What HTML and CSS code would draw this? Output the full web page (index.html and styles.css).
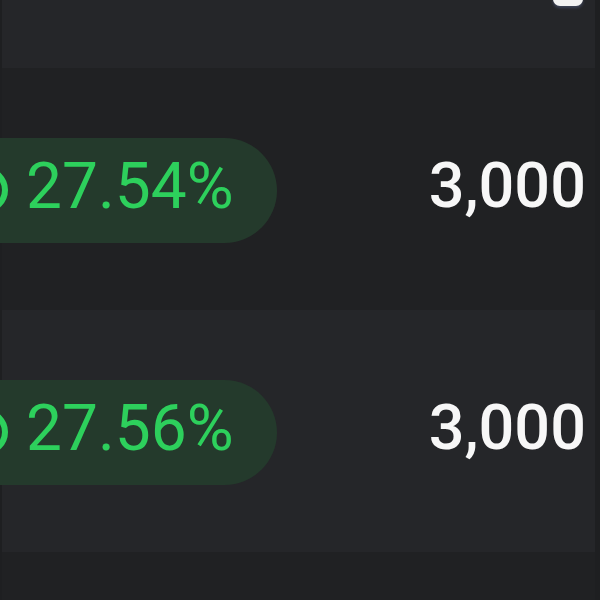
FILE: index.html
```html
<!DOCTYPE html>
<html lang="en">
<head>
  <meta charset="UTF-8" />
  <title>Rates</title>
  <link rel="stylesheet" href="styles.css">
</head>
<body>
  <div class="rates">
    <!-- header row, only its bottom edge is in view -->
    <div class="rates__row rates__row--head">
      <span class="rates__sort"></span>
    </div>

    <div class="rates__row">
      <div class="rates__change">
        <svg class="rates__icon" width="30" height="50" viewBox="0 0 30 50">
          <circle cx="-15" cy="25" r="20" fill="none" stroke="#2dd05c" stroke-width="6" />
        </svg>
        <span>27.54%</span>
      </div>
      <div class="rates__amount">3,000</div>
    </div>

    <div class="rates__row">
      <div class="rates__change">
        <svg class="rates__icon" width="30" height="50" viewBox="0 0 30 50">
          <circle cx="-15" cy="25" r="20" fill="none" stroke="#2dd05c" stroke-width="6" />
        </svg>
        <span>27.56%</span>
      </div>
      <div class="rates__amount">3,000</div>
    </div>

    <div class="rates__row rates__row--tail"></div>
  </div>
</body>
</html>
```

FILE: styles.css
```css
/* Global */
body {
  margin: 0;
  background: #202123;
  font-family: 'Roboto', 'Liberation Sans', sans-serif;
  overflow: hidden;
}
/* Table */
.rates {
  width: 600px;
  border-left: 2px solid #1e1f21;
  border-right: 5px solid #1e1f21;
  box-sizing: border-box;
}
.rates__row {
  display: flex;
  align-items: center;
  justify-content: space-between;
  height: 242px;
  background: #202123;
  padding-right: 9px;
}
.rates__row:nth-child(odd) {
  background: #252629;
}
.rates__row--head {
  height: 68px;
  align-items: flex-start;
  justify-content: flex-end;
  padding-right: 12px;
}
.rates__row--tail {
  height: 48px;
}
/* bottom of the header sort mark */
.rates__sort {
  width: 30px;
  height: 14px;
  margin-top: -8px;
  border-radius: 7px;
  background: #f2f2f2;
  box-shadow: 0 2px 3px rgba(120, 140, 200, 0.3);
}
/* Change pill */
.rates__change {
  display: flex;
  align-items: center;
  height: 105px;
  margin-left: -40px;
  margin-top: 2px;
  padding: 0 43px 0 12px;
  border-radius: 0 53px 53px 0;
  background: #243a2c;
  color: #2dd05c;
  font-size: 64px;
  line-height: 1;
}
.rates__icon {
  display: block;
  margin-left: 26px;
  margin-right: -4px;
}
.rates__change span {
  margin-top: -6px;
}
/* Amount */
.rates__amount {
  color: #f7f7f7;
  font-size: 63px;
  font-weight: 500;
  line-height: 1;
  margin-top: -8px;
}
```
